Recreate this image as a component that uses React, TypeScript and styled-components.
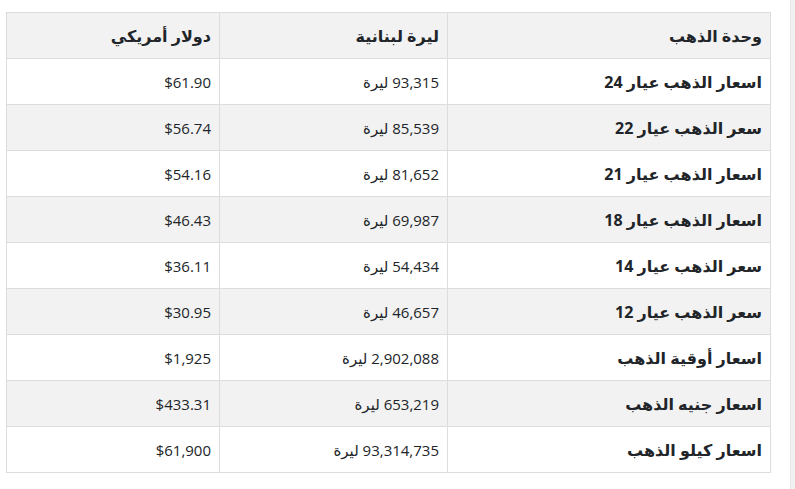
import styled, { createGlobalStyle } from "styled-components";

const GlobalStyle = createGlobalStyle`
  html, body {
    margin: 0;
    padding: 0;
    background: #fff;
  }
  body {
    font-family: "Open Sans", "DejaVu Sans", sans-serif;
    color: #212529;
  }
`;

const Page = styled.div`
  display: flex;
  width: 795px;
  height: 489px;
  overflow: hidden;
`;

const Main = styled.main`
  flex: 1;
  min-width: 0;
  padding: 12px 20px 0 6px;
`;

const SideEdge = styled.aside`
  width: 4px;
  background: #f1f1f1;
  border-left: 1px solid #e6e6e6;
`;

const Table = styled.table`
  direction: rtl;
  width: 764px;
  border-collapse: collapse;
  table-layout: fixed;
`;

const HeadCell = styled.th<{ $w: number }>`
  width: ${(p) => p.$w}px;
  height: 46px;
  padding: 0 8px;
  text-align: right;
  font-weight: 700;
  font-size: 16px;
  background: #f2f2f2;
  border: 1px solid #dddddd;
  box-sizing: border-box;
`;

const Row = styled.tr<{ $shade: boolean }>`
  background: ${(p) => (p.$shade ? "#f2f2f2" : "#ffffff")};
`;

const Cell = styled.td<{ $bold?: boolean }>`
  height: 45px;
  padding: 0 8px;
  text-align: right;
  font-weight: ${(p) => (p.$bold ? 700 : 400)};
  font-size: ${(p) => (p.$bold ? "16px" : "15px")};
  border: 1px solid #dddddd;
  white-space: nowrap;
`;

const Num = styled.span`
  unicode-bidi: isolate;
`;

const rows = [
  ["اسعار الذهب عيار 24", "93,315", "$61.90"],
  ["سعر الذهب عيار 22", "85,539", "$56.74"],
  ["اسعار الذهب عيار 21", "81,652", "$54.16"],
  ["اسعار الذهب عيار 18", "69,987", "$46.43"],
  ["سعر الذهب عيار 14", "54,434", "$36.11"],
  ["سعر الذهب عيار 12", "46,657", "$30.95"],
  ["اسعار أوقية الذهب", "2,902,088", "$1,925"],
  ["اسعار جنيه الذهب", "653,219", "$433.31"],
  ["اسعار كيلو الذهب", "93,314,735", "$61,900"],
];

export default function App() {
  return (
    <>
      <GlobalStyle />
      <Page>
        <Main>
          <Table>
            <thead>
              <tr>
                <HeadCell $w={323}>وحدة الذهب</HeadCell>
                <HeadCell $w={228}>ليرة لبنانية</HeadCell>
                <HeadCell $w={213}>دولار أمريكي</HeadCell>
              </tr>
            </thead>
            <tbody>
              {rows.map(([unit, lira, usd], i) => (
                <Row key={unit} $shade={i % 2 === 1}>
                  <Cell $bold>{unit}</Cell>
                  <Cell>
                    <Num>{lira}</Num> ليرة
                  </Cell>
                  <Cell>
                    <Num dir="ltr">{usd}</Num>
                  </Cell>
                </Row>
              ))}
            </tbody>
          </Table>
        </Main>
        <SideEdge />
      </Page>
    </>
  );
}
